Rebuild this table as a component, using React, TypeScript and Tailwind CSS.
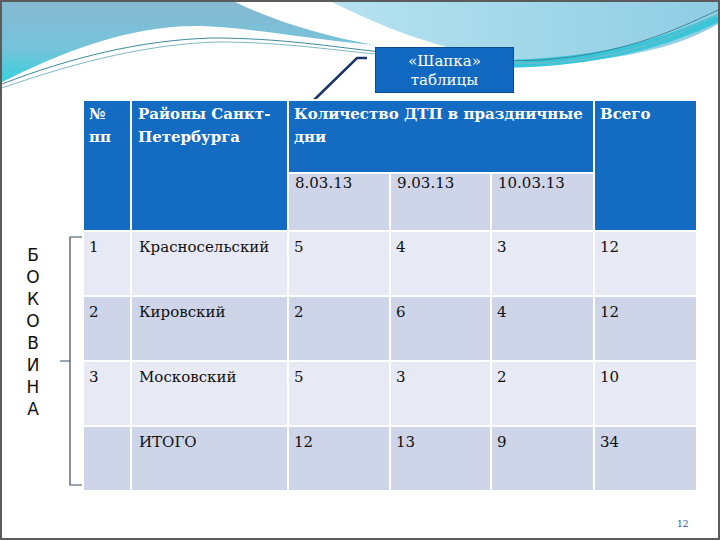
import React from "react";

const serif = { fontFamily: '"DejaVu Serif", "Liberation Serif", serif' };

const rows = [
  { n: "1", name: "Красносельский", a: "5", b: "4", c: "3", t: "12", bg: "bg-[#e7eaf4]" },
  { n: "2", name: "Кировский", a: "2", b: "6", c: "4", t: "12", bg: "bg-[#ced5e9]" },
  { n: "3", name: "Московский", a: "5", b: "3", c: "2", t: "10", bg: "bg-[#e7eaf4]" },
  { n: "", name: "ИТОГО", a: "12", b: "13", c: "9", t: "34", bg: "bg-[#ced5e9]" },
];

function Waves() {
  return (
    <svg className="absolute left-0 top-0" width="716" height="120" viewBox="0 0 716 120">
      <defs>
        <linearGradient id="lb" x1="0" y1="0" x2="0" y2="1">
          <stop offset="0" stopColor="#86b9d2" />
          <stop offset="0.6" stopColor="#74c4da" />
          <stop offset="1" stopColor="#36d0dc" />
        </linearGradient>
        <linearGradient id="rb" x1="0" y1="0" x2="1" y2="0">
          <stop offset="0" stopColor="#b6e2ef" />
          <stop offset="1" stopColor="#8fcde4" />
        </linearGradient>
      </defs>
      <path d="M0,0 H233 C270,18 320,34 372,43 C300,36 250,26 200,24 C130,22 60,50 0,80 Z" fill="url(#lb)" />
      <path d="M330,0 H716 V22 C680,44 620,58 560,60 C480,60 410,40 330,0 Z" fill="url(#rb)" />
      <path d="M500,62 C600,60 660,42 716,16" stroke="#38c6d8" strokeWidth="8" fill="none" />
      <path d="M0,82 C70,55 140,38 210,36 C280,36 330,45 380,50 C440,56 500,60 540,58 C620,52 670,30 716,8" stroke="#3d8a9a" strokeWidth="1" fill="none" />
      <path d="M0,86 C80,58 150,42 215,40 C285,40 335,49 385,53 C445,58 505,62 545,61 C625,56 675,34 716,12" stroke="#7fb8c4" strokeWidth="1" fill="none" />
    </svg>
  );
}

export default function App() {
  return (
    <div className="relative w-[720px] h-[540px] overflow-hidden bg-white border-2 border-[#5b5b5b]">
      <Waves />

      {/* callout */}
      <svg className="absolute left-0 top-0" width="400" height="110" viewBox="0 0 400 110">
        <path d="M365,56 H355 L311,99" stroke="#1b3566" strokeWidth="2.5" fill="none" />
      </svg>
      <div
        className="absolute left-[373px] top-[45px] w-[139px] h-[46px] bg-[#1168c0] border border-[#0c4a8c] text-white text-[15px] leading-[19px] text-center pt-[4px]"
        style={serif}
      >
        «Шапка»
        <br />
        таблицы
      </div>

      <div className="relative flex pt-[97px]">
        {/* side label */}
        <div className="w-[80px] flex pt-[137px]">
          <div
            className="w-[58px] flex flex-col items-center pt-[8px] pl-[4px] text-[17px] leading-[22px] text-[#111]"
            style={{ fontFamily: '"DejaVu Sans", sans-serif' }}
          >
            {"БОКОВИНА".split("").map((ch, i) => (
              <span key={i}>{ch}</span>
            ))}
          </div>
          <svg width="22" height="252" viewBox="0 0 22 252" className="shrink-0">
            <path d="M22,1 H10 V249 H22 M10,125 H0" stroke="#3b4a5c" strokeWidth="1.2" fill="none" />
          </svg>
        </div>

        <table className="table-fixed border-collapse w-[614px]" style={serif}>
          <colgroup>
            <col className="w-[48px]" />
            <col className="w-[157px]" />
            <col className="w-[102px]" />
            <col className="w-[101px]" />
            <col className="w-[103px]" />
            <col className="w-[103px]" />
          </colgroup>
          <tbody>
            <tr className="h-[73px]">
              <td rowSpan={2} className="align-top bg-[#136bc2] border-2 border-white text-white font-bold text-[15px] leading-[23px] px-[5px] pt-[2px]">
                №
                <br />
                пп
              </td>
              <td rowSpan={2} className="align-top bg-[#136bc2] border-2 border-white text-white font-bold text-[15px] leading-[23px] px-[6px] pt-[2px]">
                Районы Санкт-Петербурга
              </td>
              <td colSpan={3} className="align-top bg-[#136bc2] border-2 border-white text-white font-bold text-[15px] leading-[23px] px-[5px] pt-[2px]">
                Количество ДТП в праздничные дни
              </td>
              <td rowSpan={2} className="align-top bg-[#136bc2] border-2 border-white text-white font-bold text-[15px] leading-[23px] px-[5px] pt-[2px]">
                Всего
              </td>
            </tr>
            <tr className="h-[58px]">
              {["8.03.13", "9.03.13", "10.03.13"].map((d) => (
                <td key={d} className="align-top bg-[#cfd5e8] border-2 border-white text-[#111] text-[15px] leading-[18px] px-[6px] pt-[0px]">
                  {d}
                </td>
              ))}
            </tr>
            {rows.map((r, i) => (
              <tr key={i} className={`h-[65px] ${r.bg}`}>
                {[r.n, r.name, r.a, r.b, r.c, r.t].map((v, j) => (
                  <td
                    key={j}
                    className={`align-top border-2 border-white text-[#111] text-[15px] leading-[22px] pt-[4px] ${j === 1 ? "px-[7px]" : "px-[5px]"}`}
                  >
                    {v}
                  </td>
                ))}
              </tr>
            ))}
          </tbody>
        </table>
      </div>

      <div className="absolute left-[675px] top-[516px] text-[9px] text-[#1f4e9a]" style={serif}>
        12
      </div>
    </div>
  );
}
